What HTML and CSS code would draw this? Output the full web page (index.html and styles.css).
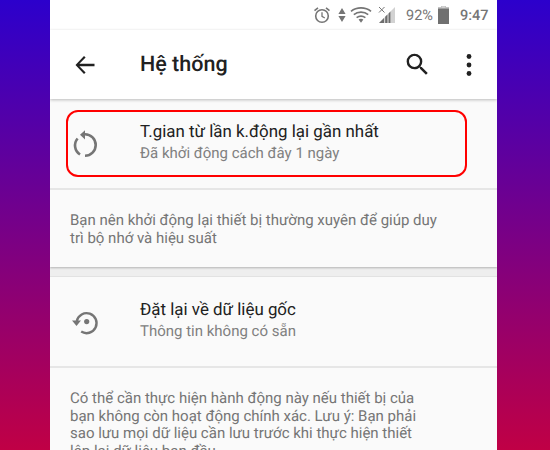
FILE: index.html
```html
<!DOCTYPE html>
<html lang="vi">
<head>
<meta charset="utf-8">
<title>Hệ thống</title>
<link rel="stylesheet" href="styles.css">
</head>
<body>
<div class="phone">
  <div class="status">
    <svg class="st-alarm" width="18" height="18" viewBox="0 0 18 18" fill="none" stroke="#757575"><circle cx="9" cy="10" r="6.3" stroke-width="1.6"/><path d="M9 6.2V10.4L11.8 12" stroke-width="1.3"/><path d="M1.5 4.6L5 1.8M16.5 4.6L13 1.8" stroke-width="1.6"/></svg>
    <svg class="st-arrows" width="8" height="16" viewBox="0 0 8 16" fill="#757575"><path d="M4 1L7.6 7H.4zM4 15L.4 9H7.6z"/></svg>
    <svg class="st-wifi" width="22" height="18" viewBox="0 0 22 18" fill="none" stroke="#757575" stroke-width="1.7"><path d="M1 5.4C6.6.8 15.4.8 21 5.4"/><path d="M3.8 8.6C7.8 5.4 14.2 5.4 18.2 8.6"/><path d="M6.6 11.6C9.2 9.8 12.8 9.8 15.4 11.6"/><path d="M8.6 13.6L11 16.8 13.4 13.6C12 12.6 10 12.6 8.6 13.6Z" fill="#757575" stroke="none"/></svg>
    <svg class="st-signal" width="18" height="18" viewBox="0 0 18 18"><path d="M1 1L6.5 6.5M6.5 1L1 6.5" stroke="#757575" stroke-width="1" fill="none"/><path d="M17 1V17H1z" fill="#d2d2d2"/><path d="M1 17L6 12V17zM7.2 10.8L9.4 8.6V17H7.2zM10.6 7.4L12.4 5.6V17H10.6z" fill="#6e6e6e"/></svg>
    <span class="st-pct">92%</span>
    <svg class="st-batt" width="11" height="18" viewBox="0 0 11 18"><path d="M3.5 0H7.5V1.5H11V18H0V1.5H3.5z" fill="#707070"/><path d="M3.5 0H7.5V1.5H11V2.6H0V1.5H3.5z" fill="#cfcfcf"/></svg>
    <span class="st-time">9:47</span>
  </div>
  <header class="toolbar">
    <svg class="back" width="24" height="24" viewBox="0 0 24 24" fill="#212121"><path d="M21.5 10.7H6.4l6.2-6.2L11 3 2.5 12 11 21l1.6-1.5-6.2-6.2h15.1z"/></svg>
    <h1 class="title">Hệ thống</h1>
    <svg class="search" width="29" height="29" viewBox="0 0 24 24" fill="#212121"><path d="M15.5 14h-.79l-.28-.27A6.471 6.471 0 0 0 16 9.5 6.5 6.5 0 1 0 9.5 16c1.61 0 3.09-.59 4.23-1.57l.27.28v.79l5 4.99L20.49 19l-4.99-5zm-6 0C7.01 14 5 11.99 5 9.5S7.01 5 9.5 5 14 7.01 14 9.5 11.99 14 9.5 14z"/></svg>
    <svg class="more" width="24" height="24" viewBox="0 0 24 24" fill="#212121"><circle cx="12" cy="3.5" r="2.4"/><circle cx="12" cy="12" r="2.4"/><circle cx="12" cy="20.5" r="2.4"/></svg>
  </header>
  <section class="card first">
    <div class="row">
      <svg class="row-icon" width="26" height="26" viewBox="0 0 26 26" fill="none" stroke="#757575" stroke-width="2.6"><path d="M5.6 7.5A10.7 10.7 0 0 0 8 23.5"/><path d="M13 24.7A10.7 10.7 0 0 0 13 3.3H10"/><path d="M8 3.8L13 -.8V8.4z" fill="#757575" stroke="none"/></svg>
      <div class="row-text">
        <div class="row-title">T.gian từ lần k.động lại gần nhất</div>
        <div class="row-sub">Đã khởi động cách đây 1 ngày</div>
      </div>
    </div>
    <p class="note">Bạn nên khởi động lại thiết bị thường xuyên để giúp duy trì bộ nhớ và hiệu suất</p>
  </section>
  <section class="card second">
    <div class="row">
      <svg class="row-icon" width="26" height="26" viewBox="0 0 26 26" fill="none" stroke="#757575" stroke-width="2.4"><path d="M4.8 12A10 10 0 1 1 9.2 22.6"/><path d="M0 11.6H9L4.5 17z" fill="#757575" stroke="none"/><circle cx="14.7" cy="12.6" r="2.6" fill="#757575" stroke="none"/></svg>
      <div class="row-text">
        <div class="row-title">Đặt lại về dữ liệu gốc</div>
        <div class="row-sub">Thông tin không có sẵn</div>
      </div>
    </div>
    <p class="note">Có thể cần thực hiện hành động này nếu thiết bị của bạn không còn hoạt động chính xác. Lưu ý: Bạn phải sao lưu mọi dữ liệu cần lưu trước khi thực hiện thiết lập lại dữ liệu ban đầu</p>
  </section>
  <div class="highlight"></div>
</div>
</body>
</html>
```
FILE: styles.css
```css
html, body { margin: 0; height: 100%; overflow: hidden; }
body {
  width: 550px; height: 450px;
  background: linear-gradient(180deg, #2c00cc 0%, #c00045 100%);
  font-family: Roboto, "Noto Sans", sans-serif;
  text-rendering: geometricPrecision;
  padding-left: 50px; box-sizing: border-box;
}
.phone { position: relative; width: 447px; height: 450px; background: #eeeeee; overflow: hidden; }
.status {
  height: 30px; background: #fff; display: flex; align-items: center;
  padding-left: 263px; color: #757575; font-size: 14.5px;
}
.st-alarm { margin-right: 7px; }
.st-arrows { margin-right: 4px; }
.st-wifi { margin-right: 6px; }
.st-signal { margin-right: 10px; }
.st-pct { margin-right: 5px; }
.st-batt { margin-right: 11px; }
.st-time { font-weight: 500; font-size: 14.5px; }
.toolbar {
  height: 69px; background: #fff; display: flex; align-items: center;
  padding-left: 23px; box-shadow: 0 1px 3px rgba(0,0,0,.25); position: relative;
}
.back { flex: none; }
.title { margin: 0 0 0 43px; font-size: 21.5px; font-weight: 500; color: #212121; flex: 1; }
.search { margin-right: 25px; }
.more { margin-right: 16px; }
.card { background: #fafafa; }
.first { height: 168px; box-shadow: 0 1px 2px rgba(0,0,0,.25); }
.second { margin-top: 9px; height: 200px; border-top: 1px solid #e2e2e2; }
.row {
  height: 91px; display: flex; align-items: center; padding: 0 0 2px 22px;
  border-bottom: 2px solid #e6e6e6; box-sizing: border-box;
}
.row-icon { flex: none; overflow: visible; margin-top: 2px; }
.row-text { margin-left: 42px; }
.row-title { font-size: 16.9px; color: #212121; line-height: 22px; }
.row-sub { font-size: 15px; color: #808080; line-height: 21px; }
.note { margin: 0; padding: 22px 62px 0 20px; font-size: 15px; line-height: 17.6px; color: #757575; }
.first .note { padding-right: 50px; }
.highlight {
  position: absolute; left: 16px; top: 110px; width: 401px; height: 67px;
  border: 2px solid #f00; border-radius: 12px; box-sizing: border-box;
}
```
